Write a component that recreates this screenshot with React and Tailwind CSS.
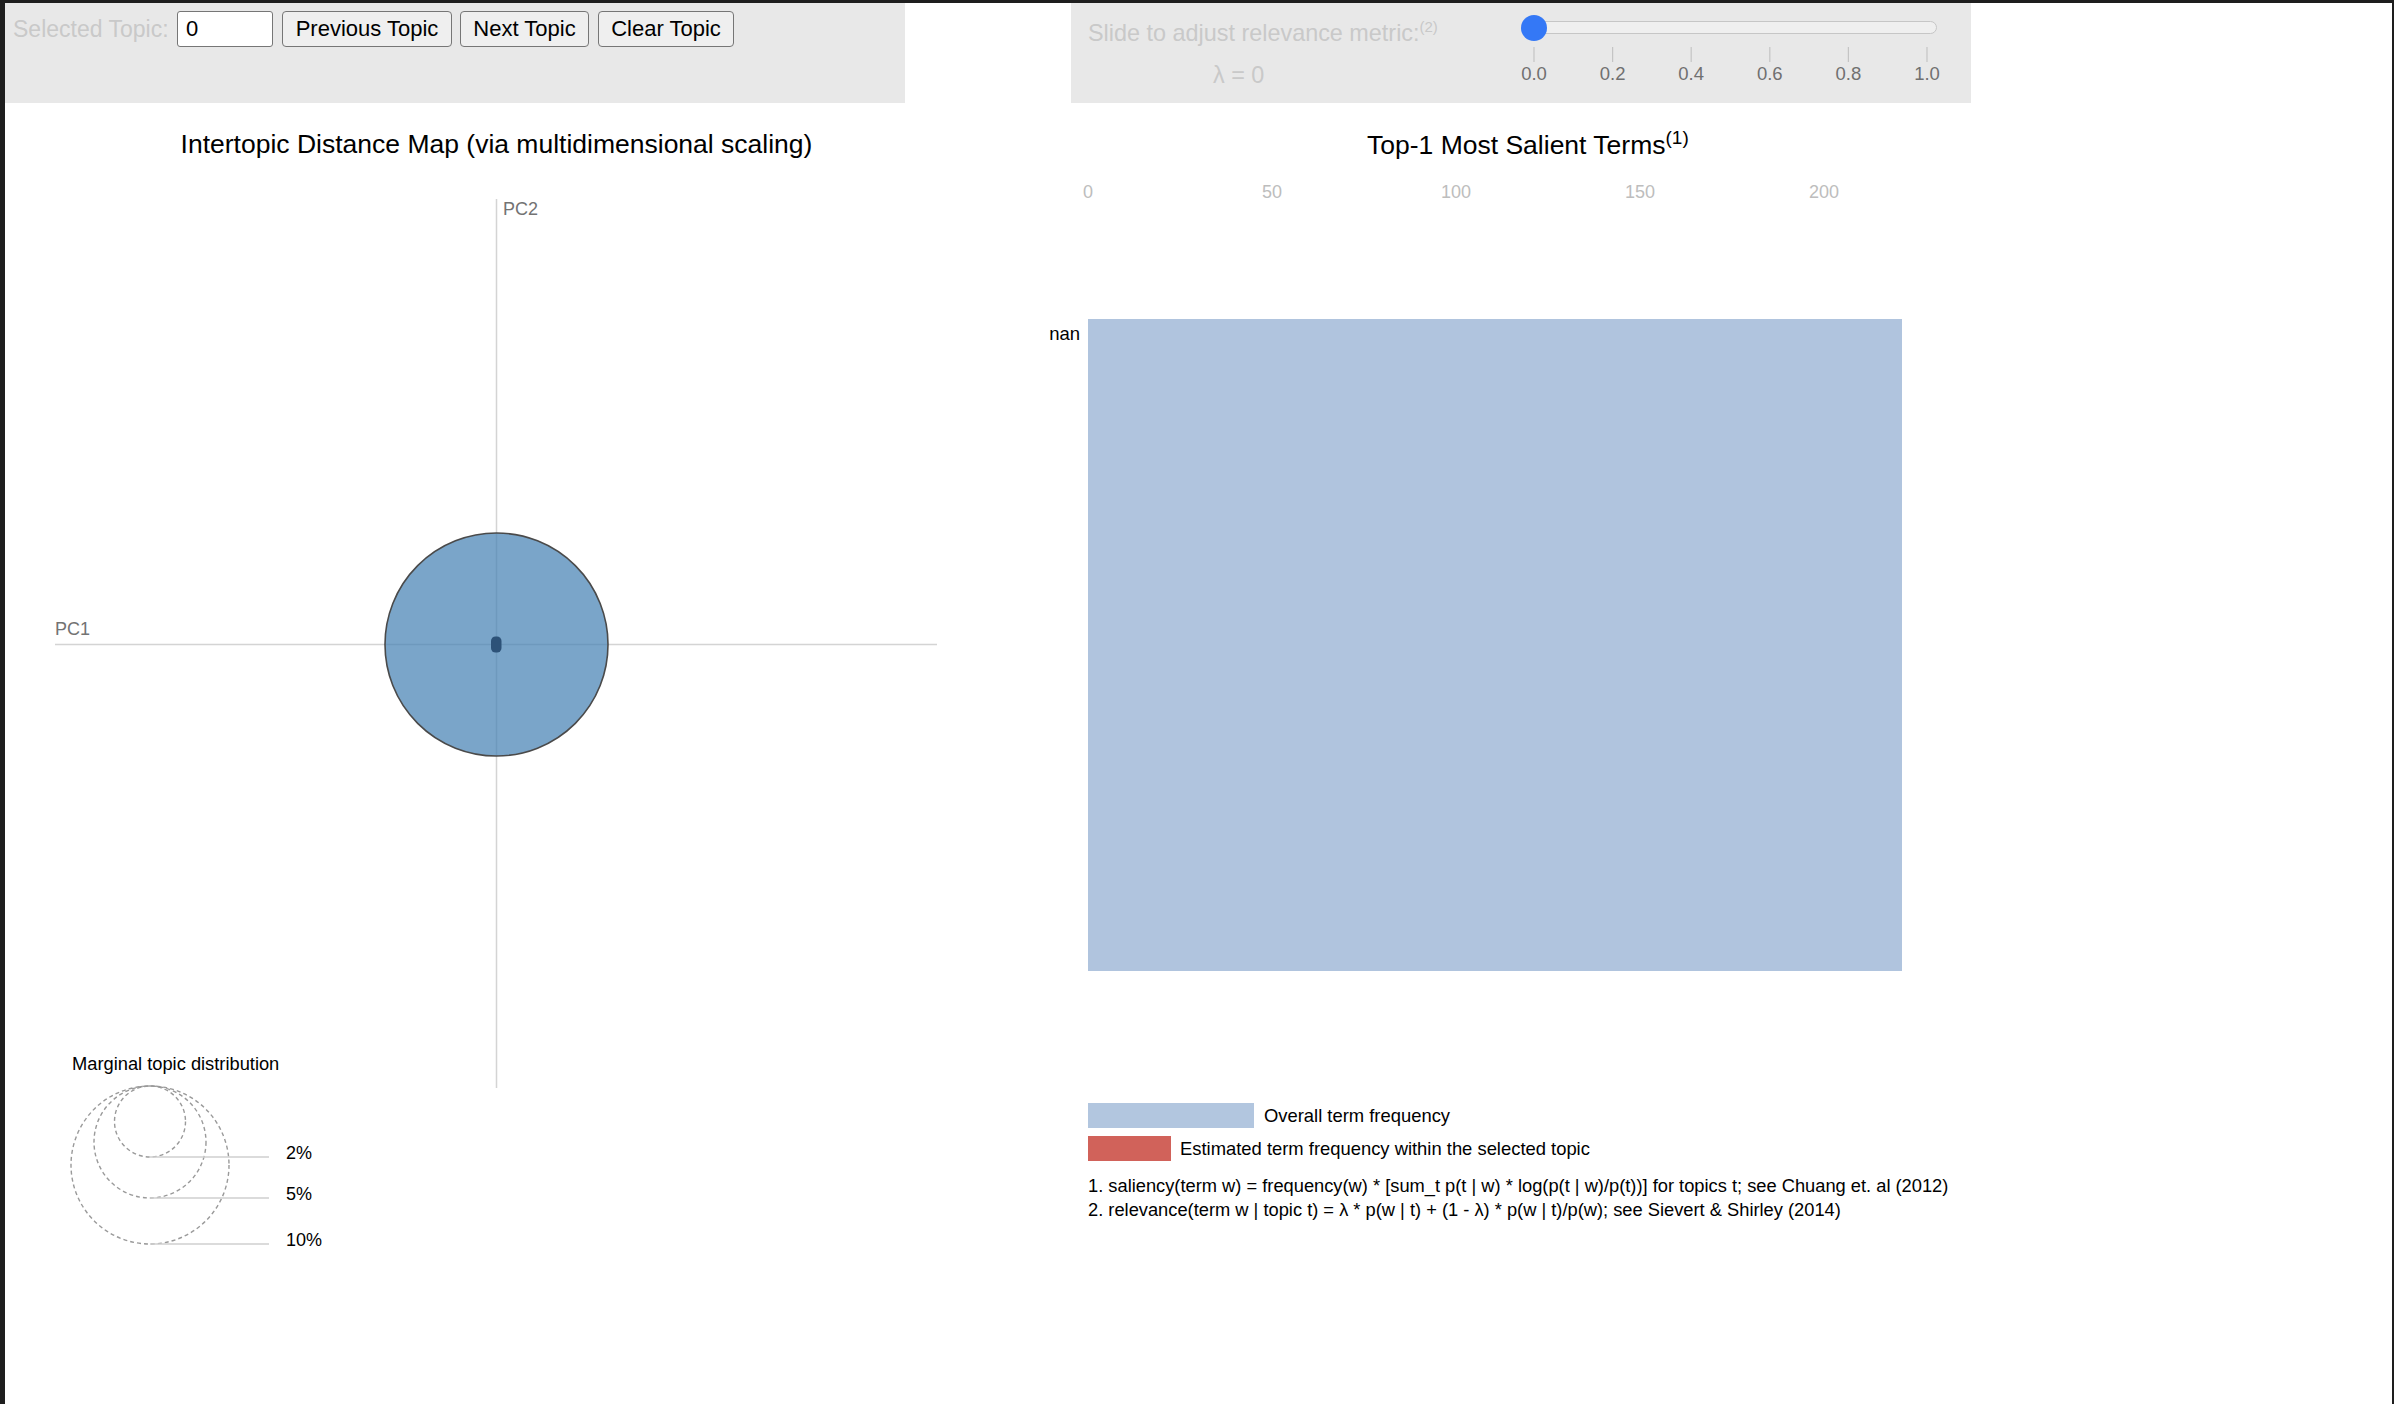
export default function App() {
  const svgFont = "'Liberation Sans', Arial, sans-serif";
  const sliderTicks = ["0.0", "0.2", "0.4", "0.6", "0.8", "1.0"];
  const barTicks = [0, 50, 100, 150, 200];
  return (
    <div className="w-[2394px] h-[1404px] bg-[#1e1e1e] pt-[3px] pl-[5px] pr-[2px] font-['Liberation_Sans',Arial,sans-serif]">
      <div className="w-full h-full bg-white flex flex-col">
        {/* top controls */}
        <div className="flex gap-[166px]">
          <div className="w-[900px] h-[100px] bg-[#e8e8e8] flex items-start pt-[8px] pl-[8px]">
            <div className="w-[164px] h-[36px] flex items-center text-[23px] text-[#c9c9c9] leading-none whitespace-nowrap">
              Selected Topic:
            </div>
            <input
              readOnly
              value="0"
              className="w-[96px] h-[36px] bg-white border border-[#767676] rounded-[3px] pl-[8px] text-[22px] text-black outline-none"
            />
            <button className="ml-[9px] w-[170px] h-[36px] bg-[#efefef] border border-[#767676] rounded-[4px] text-[22px] text-black leading-none">
              Previous Topic
            </button>
            <button className="ml-[8px] w-[129px] h-[36px] bg-[#efefef] border border-[#767676] rounded-[4px] text-[22px] text-black leading-none">
              Next Topic
            </button>
            <button className="ml-[9px] w-[136px] h-[36px] bg-[#efefef] border border-[#767676] rounded-[4px] text-[22px] text-black leading-none">
              Clear Topic
            </button>
          </div>
          <div className="w-[900px] h-[100px] bg-[#e8e8e8] flex pl-[17px]">
            <div className="w-[433px] flex flex-col text-[#c9c9c9]">
              <div className="mt-[16px] h-[28px] leading-[28px] text-[23.4px] whitespace-nowrap">
                Slide to adjust relevance metric:
                <span className="text-[15px] align-super leading-none">(2)</span>
              </div>
              <div className="mt-[14px] h-[28px] leading-[28px] text-[23.4px] pl-[125px] whitespace-nowrap">λ = 0</div>
            </div>
            <div className="flex flex-col">
              <div className="relative mt-[18px] w-[416px] h-[13px] rounded-full bg-[#efefef] border border-[#c6c6c6]">
                <div className="absolute left-[-1px] top-[-7px] w-[26px] h-[26px] rounded-full bg-[#3478f6]" />
              </div>
              <svg width="440" height="56" fontFamily={svgFont}>
                {sliderTicks.map((t, i) => {
                  const x = 13 + i * 78.6;
                  return (
                    <g key={t}>
                      <line x1={x} y1="13" x2={x} y2="28" stroke="#c4c4c4" strokeWidth="1.2" />
                      <text x={x} y="46" fontSize="18.5" fill="#707070" textAnchor="middle">
                        {t}
                      </text>
                    </g>
                  );
                })}
              </svg>
            </div>
          </div>
        </div>

        {/* charts */}
        <div className="flex">
          <div className="w-[1026px] flex flex-col">
            <div className="mt-[25px] w-[983px] h-[32px] leading-[32px] text-center text-[26.5px] text-black whitespace-nowrap">
              Intertopic Distance Map (via multidimensional scaling)
            </div>
            <svg width="1026" height="1100" viewBox="5 160 1026 1100" fontFamily={svgFont}>
              <line x1="496.5" y1="199" x2="496.5" y2="1088" stroke="#d4d4d4" strokeWidth="1.5" />
              <line x1="55" y1="644.5" x2="937" y2="644.5" stroke="#d4d4d4" strokeWidth="1.5" />
              <text x="503" y="214.5" fontSize="18" fill="#737373">PC2</text>
              <text x="55" y="635" fontSize="18" fill="#737373">PC1</text>
              <circle cx="496.5" cy="644.5" r="111.5" fill="#4682b4" fillOpacity="0.72" stroke="#4a4a4a" strokeWidth="1.6" />
              <rect x="491" y="636.5" width="10.5" height="16" rx="4.5" fill="#2d5278" />

              <text x="72" y="1069.5" fontSize="18.3" fill="#000">Marginal topic distribution</text>
              <circle cx="150" cy="1121.5" r="35.5" fill="none" stroke="#9a9a9a" strokeWidth="1.4" strokeDasharray="4 3" />
              <circle cx="150" cy="1142" r="56" fill="none" stroke="#9a9a9a" strokeWidth="1.4" strokeDasharray="4 3" />
              <circle cx="150" cy="1165" r="79" fill="none" stroke="#9a9a9a" strokeWidth="1.4" strokeDasharray="4 3" />
              <line x1="150" y1="1157" x2="269" y2="1157" stroke="#cfcfcf" strokeWidth="1.5" />
              <line x1="150" y1="1198" x2="269" y2="1198" stroke="#cfcfcf" strokeWidth="1.5" />
              <line x1="150" y1="1244" x2="269" y2="1244" stroke="#cfcfcf" strokeWidth="1.5" />
              <text x="286" y="1158.5" fontSize="18" fill="#000">2%</text>
              <text x="286" y="1199.5" fontSize="18" fill="#000">5%</text>
              <text x="286" y="1245.5" fontSize="18" fill="#000">10%</text>
            </svg>
          </div>

          <div className="flex flex-col">
            <div className="mt-[25px] h-[32px] leading-[32px] pl-[336px] text-[26.5px] text-black whitespace-nowrap">
              Top-1 Most Salient Terms
              <span className="text-[19px] align-super leading-none">(1)</span>
            </div>
            <svg width="940" height="820" viewBox="1031 160 940 820" fontFamily={svgFont}>
              {barTicks.map((t) => (
                <text key={t} x={1088 + t * 3.68} y="197.5" fontSize="18" fill="#bdbdbd" textAnchor="middle">
                  {t}
                </text>
              ))}
              <text x="1080" y="339.5" fontSize="18.5" fill="#000" textAnchor="end">nan</text>
              <rect x="1088" y="319" width="814" height="652" fill="#b0c4de" />
            </svg>
            <div className="pl-[57px] mt-[123px] flex flex-col text-[18.4px] text-black whitespace-nowrap">
              <div className="flex items-center h-[25px]">
                <div className="w-[166px] h-[25px] bg-[#b2c6df]" />
                <span className="ml-[10px]">Overall term frequency</span>
              </div>
              <div className="flex items-center h-[25px] mt-[8px]">
                <div className="w-[83px] h-[25px] bg-[#d1625a]" />
                <span className="ml-[9px]">Estimated term frequency within the selected topic</span>
              </div>
              <div className="mt-[14px] leading-[22px] text-[18.3px]">
                1. saliency(term w) = frequency(w) * [sum_t p(t | w) * log(p(t | w)/p(t))] for topics t; see Chuang et. al (2012)
              </div>
              <div className="mt-[2px] leading-[22px] text-[18.3px]">
                2. relevance(term w | topic t) = λ * p(w | t) + (1 - λ) * p(w | t)/p(w); see Sievert &amp; Shirley (2014)
              </div>
            </div>
          </div>
        </div>
      </div>
    </div>
  );
}
